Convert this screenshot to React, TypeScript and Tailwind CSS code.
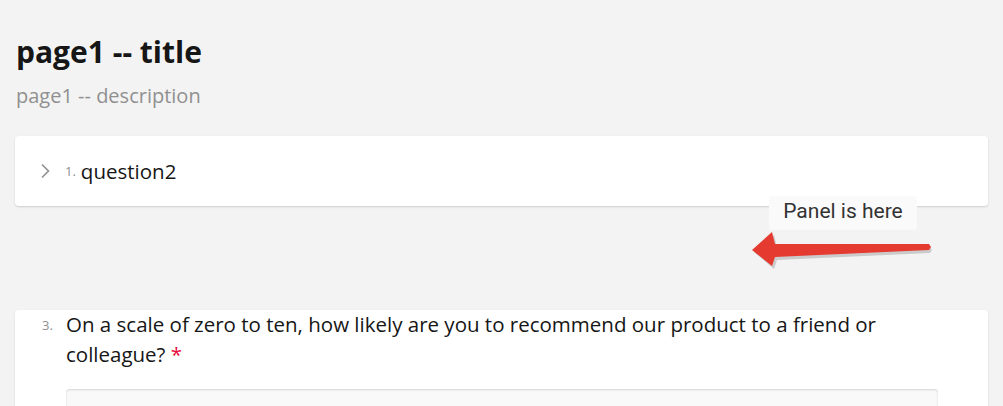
import React from "react";

const font = { fontFamily: '"Open Sans", "Noto Sans", sans-serif' };

export default function App() {
  return (
    <div className="relative w-[1003px] h-[406px] overflow-hidden bg-[#f3f3f3] text-[#161616]" style={font}>
      <div className="px-[15px] pt-[28px]">
        {/* page header */}
        <div className="pl-[1px]">
          <h1 className="text-[30px] leading-[48px] font-bold">page1 -- title</h1>
          <p className="text-[20px] leading-[28px] text-[#909090] mt-[6px]">page1 -- description</p>
        </div>

        {/* collapsed question */}
        <div className="mt-[26px] h-[70px] bg-white rounded-[4px] shadow-[0_1px_2px_rgba(0,0,0,0.15)] flex items-center pl-[24px]">
          <svg width="12" height="16" viewBox="0 0 12 16" className="mr-[14px]">
            <path d="M3 1.5 L9.5 8 L3 14.5" fill="none" stroke="#909090" strokeWidth="1.6" />
          </svg>
          <span className="text-[13px] text-[#909090] mr-[5px] mt-[2px]">1.</span>
          <span className="text-[20.5px] leading-[30px] font-medium">question2</span>
        </div>

        {/* rating question */}
        <div className="mt-[104px] bg-white rounded-[4px] shadow-[0_1px_2px_rgba(0,0,0,0.15)] pl-[27px] pr-[50px] h-[200px]">
          <div className="flex">
            <span className="w-[24px] shrink-0 text-[13px] leading-[30px] text-[#909090]">3.</span>
            <p className="text-[20.5px] leading-[30px] font-medium pr-[40px] mt-[-1px]">
              On a scale of zero to ten, how likely are you to recommend our product to a friend or colleague?{" "}
              <span className="text-[#e60a3e]">*</span>
            </p>
          </div>
          <div className="ml-[24px] mt-[20px] h-[60px] bg-[#f9f9f9] rounded-[4px] shadow-[inset_0_1px_2px_rgba(0,0,0,0.15)]" />
        </div>
      </div>

      {/* annotation */}
      <div className="absolute left-[769px] top-[196px] w-[148px] h-[34px] bg-[#fafafa] rounded-[3px] flex items-start justify-center pt-[1px] text-[21px] leading-[28px] text-[#333]" style={{ fontFamily: 'Roboto, "Noto Sans", sans-serif' }}>
        Panel is here
      </div>
      <svg className="absolute left-[748px] top-[228px]" width="190" height="44" viewBox="748 228 190 44">
        <polygon points="754,252 774,235 777,247 930,247 932,250 930,253 777,260 774,269" fill="#b0b0b0" opacity="0.6" />
        <polygon points="752,250 772,232 775,244 929,244 931,247 929,250 775,257 772,266" fill="#e53a30" />
      </svg>
    </div>
  );
}
